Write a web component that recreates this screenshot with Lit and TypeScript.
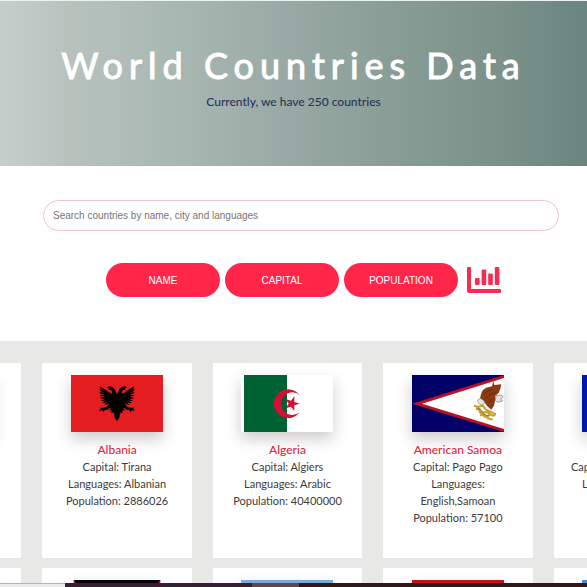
import { LitElement, html, svg, css } from "lit";
import { customElement, property } from "lit/decorators.js";

interface Country {
  name: string;
  flag: string;
  capital?: string;
  languages?: string;
  population?: number;
}

const countries: Country[] = [
  { name: "Åland Islands", flag: "ax" },
  { name: "Albania", capital: "Tirana", languages: "Albanian", population: 2886026, flag: "al" },
  { name: "Algeria", capital: "Algiers", languages: "Arabic", population: 40400000, flag: "dz" },
  { name: "American Samoa", capital: "Pago Pago", languages: "English,Samoan", population: 57100, flag: "as" },
  { name: "Andorra", capital: "Andorra la Vella", languages: "Catalan", flag: "ad" },
  { name: "Antarctica", flag: "aq" },
  { name: "Antigua and Barbuda", flag: "ag" },
  { name: "Argentina", flag: "ar" },
  { name: "Armenia", flag: "am" },
  { name: "Aruba", flag: "aw" },
];

const eagleHalf = svg`
  <path d="M138 57 L134 50 L131 42 L124 35 L114 34 L107 39 L115 40 L112 46 L119 44 L124 50 L122 56
    L113 51 L106 46 L101 42 L94 39 L86 34 L89 41 L98 46 L85 42 L89 49 L99 53 L85 51 L90 57 L100 59
    L85 60 L91 64 L101 65 L86 69 L94 71 L102 71 L89 77 L97 78 L105 76 L93 84 L101 84 L109 80
    L100 90 L109 88 L115 84 L110 92 L105 97 L96 98 L86 98 L90 102 L83 107 L94 106 L97 112 L101 105
    L110 104 L115 100 L119 98 L116 108 L122 106 L121 115 L127 112 L130 120 L131 129 L138 138 Z"/>`;

const flags: Record<string, unknown> = {
  ax: svg`<rect width="276" height="171" fill="#0053a5"/>
    <path d="M100 0V171M0 85H276" stroke="#ffce00" stroke-width="44"/>
    <path d="M100 0V171M0 85H276" stroke="#d21034" stroke-width="20"/>`,
  al: svg`<rect width="276" height="171" fill="#e41e20"/>
    <g>${eagleHalf}</g><g transform="matrix(-1 0 0 1 276 0)">${eagleHalf}</g>`,
  dz: svg`<rect width="276" height="171" fill="#fff"/>
    <rect x="9" width="129" height="171" fill="#006233"/>
    <path d="M176 60A43 43 0 1 0 176 112A34 34 0 1 1 176 60Z" fill="#d21034"/>
    <path d="M176 86L160 91L160 108L150 95L134 100L143 86L134 72L150 77L160 64L160 81Z" fill="#d21034"/>`,
  as: svg`<rect width="276" height="171" fill="#006"/>
    <path d="M276 0V171L0 86Z" fill="#bd1021"/>
    <path d="M276 9V162L30 86Z" fill="#fff"/>
    <path d="M244 18L247 30L268 28L265 42L260 54L250 62L250 74L246 92L238 104L226 94L216 80L204 70L207 58L212 46L222 38L240 34Z" fill="#8b3a14"/>
    <path d="M214 56L228 48L244 44M220 68L236 58L254 50M232 82L240 72" stroke="#5e220a" stroke-width="2" fill="none"/>
    <path d="M252 62L268 60L274 66L266 72L272 78L256 82L250 76Z" fill="#e4e0dc" stroke="#777" stroke-width="2"/>
    <path d="M196 76L204 70L214 76L219 84L210 90L200 86Z" fill="#e9e6e2" stroke="#888" stroke-width="2"/>
    <path d="M186 92L200 96L212 92L222 104L240 112L252 118M192 104L202 100L208 112L226 112L242 122L250 120M204 122L216 118L228 130L242 134M198 92L204 112L220 126L236 118" fill="none" stroke="#c9a02a" stroke-width="6"/>
    <path d="M192 98L206 104L216 118L232 124" fill="none" stroke="#7c5a14" stroke-width="2"/>`,
  ad: svg`<rect width="276" height="171" fill="#ffce00"/>
    <rect width="92" height="171" fill="#0018a8"/><rect x="184" width="92" height="171" fill="#d0103a"/>`,
  aq: svg`<rect width="276" height="171" fill="#3a7dce"/>`,
  ag: svg`<rect x="8" width="260" height="171" fill="#ce1126"/><path d="M8 0H268L138 171Z" fill="#000"/>`,
  ar: svg`<rect width="276" height="171" fill="#74acdf"/><rect y="57" width="276" height="57" fill="#fff"/>`,
  am: svg`<rect width="276" height="57" fill="#c8101c"/><rect y="57" width="276" height="57" fill="#0033a0"/>
    <rect y="114" width="276" height="57" fill="#f2a800"/>`,
  aw: svg`<rect width="276" height="171" fill="#418fde"/>`,
};

@customElement("country-card")
export class CountryCard extends LitElement {
  @property({ attribute: false }) country!: Country;

  static styles = css`
    :host {
      display: flex;
      flex-direction: column;
      align-items: center;
      min-width: 0;
      min-height: 195px;
      box-sizing: border-box;
      padding: 12px 16px;
      background: #fff;
      color: #3c3c3c;
      text-align: center;
      font-size: 11px;
      line-height: 17px;
    }
    .flag {
      display: block;
      flex: none;
      width: 92px;
      height: 57px;
      margin-bottom: 9px;
      box-shadow: 0 7px 14px rgba(60, 40, 40, 0.24);
    }
    .name {
      margin: 0;
      color: #dc2742;
      font-size: 12px;
      line-height: 17px;
      font-weight: 500;
      white-space: nowrap;
    }
    .line {
      margin: 0;
    }
  `;

  render() {
    const c = this.country;
    return html`
      <svg class="flag" viewBox="0 0 276 171" preserveAspectRatio="none" role="img" aria-label=${`Flag of ${c.name}`}>
        ${flags[c.flag]}
      </svg>
      <h2 class="name">${c.name}</h2>
      ${c.capital ? html`<p class="line">Capital: ${c.capital}</p>` : null}
      ${c.languages ? html`<p class="line">Languages: ${c.languages}</p>` : null}
      ${c.population ? html`<p class="line">Population: ${c.population}</p>` : null}
    `;
  }
}

@customElement("app-root")
export class AppRoot extends LitElement {
  static styles = css`
    :host {
      display: block;
      position: relative;
      height: 100vh;
      overflow: hidden;
      background: #fff;
      font-family: Lato, "Liberation Sans", sans-serif;
    }
    .banner {
      box-sizing: border-box;
      min-height: 166px;
      padding-top: 42px;
      border-top: 1px solid #e9f3f0;
      background: linear-gradient(90deg, #c6cecb 0%, #b7c2bd 12%, #a7b6b1 32%, #98a8a4 50%, #869b94 70%, #7a9089 86%, #6a867f 100%);
      text-align: center;
    }
    .title {
      margin: 0;
      color: #fff;
      font-size: 36px;
      line-height: 44px;
      font-weight: 400;
      letter-spacing: 6px;
      white-space: nowrap;
      -webkit-text-stroke: 1px #fff;
    }
    .subtitle {
      margin: 6px 0 0;
      color: #263558;
      font-size: 12px;
      line-height: 18px;
      font-weight: 500;
    }
    .controls {
      padding: 34px 28px 44px 43px;
    }
    .search {
      display: block;
      box-sizing: border-box;
      width: 100%;
      height: 31px;
      padding: 0 9px;
      border: 1px solid #f3c3d3;
      border-radius: 16px;
      background: #fff;
      color: #333;
      font: 10px "Liberation Sans", sans-serif;
    }
    .search::placeholder {
      color: #757575;
      opacity: 1;
    }
    .sorts {
      display: flex;
      align-items: center;
      justify-content: center;
      gap: 5px;
      margin-top: 32px;
      padding-left: 5px;
    }
    .sort {
      width: 114px;
      height: 34px;
      padding: 0;
      border: 0;
      border-radius: 17px;
      background: #ff264a;
      color: #fff;
      font: 10px "Liberation Sans", sans-serif;
    }
    .stats {
      margin-left: 4px;
      color: #f82b50;
      line-height: 0;
    }
    .stats svg {
      width: 34px;
      height: 26px;
      fill: currentColor;
    }
    .countries {
      overflow: hidden;
      padding: 22px 0;
      background: #e8e8e6;
    }
    .grid {
      display: grid;
      grid-template-columns: repeat(5, minmax(0, 1fr));
      gap: 10px 21px;
      margin: 0 -116px 0 -128px;
    }
    .dock {
      position: absolute;
      inset: auto 0 0 0;
      display: flex;
      height: 4px;
      background: #30171c;
    }
    .status {
      width: 11%;
      box-sizing: border-box;
      border-top: 1px solid #b5b5b5;
      background: #ececec;
    }
    .tasks {
      width: 32%;
      background: #371d36;
    }
    .active {
      width: 8%;
      background: #5b4750;
    }
  `;

  render() {
    return html`
      <header class="banner">
        <h1 class="title">World Countries Data</h1>
        <p class="subtitle">Currently, we have 250 countries</p>
      </header>
      <section class="controls">
        <input class="search" type="text" aria-label="Search countries" placeholder="Search countries by name, city and languages" />
        <div class="sorts">
          <button class="sort" type="button">NAME</button>
          <button class="sort" type="button">CAPITAL</button>
          <button class="sort" type="button">POPULATION</button>
          <a class="stats" href="#stats" aria-label="Statistics">
            <svg viewBox="0 0 34 26">
              <path d="M1 0H3Q4 0 4 1V22H33Q34 22 34 23V25Q34 26 33 26H2Q0 26 0 24V1Q0 0 1 0Z" />
              <rect x="8" y="11" width="4.6" height="7" rx="1" />
              <rect x="14.6" y="2.5" width="4.6" height="15.5" rx="1" />
              <rect x="21.2" y="6.5" width="4.6" height="11.5" rx="1" />
              <rect x="27.8" y="0" width="4.6" height="18" rx="1" />
            </svg>
          </a>
        </div>
      </section>
      <main class="countries" id="stats">
        <div class="grid">
          ${countries.map((c) => html`<country-card .country=${c}></country-card>`)}
        </div>
      </main>
      <div class="dock" aria-hidden="true">
        <div class="status"></div>
        <div class="tasks"></div>
        <div class="active"></div>
      </div>
    `;
  }
}
